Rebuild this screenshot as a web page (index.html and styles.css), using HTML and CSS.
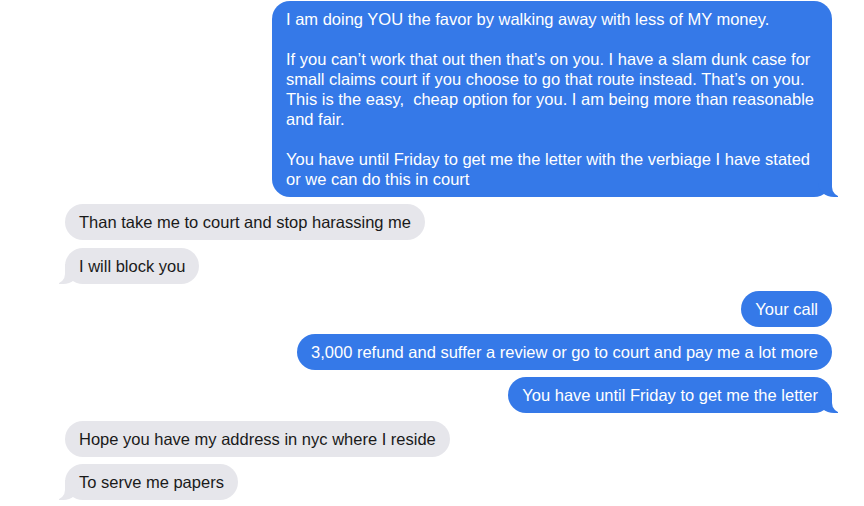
FILE: index.html
```html
<!DOCTYPE html>
<html lang="en">
<head>
    <meta charset="UTF-8">
    <meta name="viewport" content="width=device-width, initial-scale=1.0">
    <title>Messages</title>
    <link rel="stylesheet" href="styles.css">
</head>
<body>

    <div class="thread">
        <div class="msg sent tail">
            <p>I am doing YOU the favor by walking away with less of MY money.</p>
            <p>If you can’t work that out then that’s on you. I have a slam dunk case for small claims court if you choose to go that route instead. That’s on you. This is the easy,&nbsp; cheap option for you. I am being more than reasonable and fair.</p>
            <p>You have until Friday to get me the letter with the verbiage I have stated or we can do this in court</p>
        </div>

        <div class="msg received">Than take me to court and stop harassing me</div>
        <div class="msg received tail">I will block you</div>

        <div class="msg sent">Your call</div>
        <div class="msg sent">3,000 refund and suffer a review or go to court and pay me a lot more</div>
        <div class="msg sent tail">You have until Friday to get me the letter</div>

        <div class="msg received">Hope you have my address in nyc where I reside</div>
        <div class="msg received tail">To serve me papers</div>
    </div>

</body>
</html>
```

FILE: styles.css
```css
body {
    margin: 0;
    background: #fff;
    font-family: "Liberation Sans", Arial, sans-serif;
    font-size: 16.5px;
    line-height: 20px;
}
.thread {
    display: flex;
    flex-direction: column;
    gap: 7.3px;
    padding: 1px 32px 0 65px;
}
.msg {
    position: relative;
    max-width: 560px;
    box-sizing: border-box;
    padding: 8px 14px;
    border-radius: 18px;
}
.msg p {
    margin: 0 0 20px;
}
.msg p:last-child {
    margin-bottom: 0;
}
.sent {
    align-self: flex-end;
    background: #3579e8;
    color: #fff;
}
.received {
    align-self: flex-start;
    background: #e6e6eb;
    color: #1a1a1a;
}

/* petite queue de bulle */
.tail::before, .tail::after {
    content: "";
    position: absolute;
    bottom: 0;
    height: 20px;
}
.sent.tail::before {
    right: -6px;
    width: 20px;
    background: #3579e8;
    border-bottom-left-radius: 16px 14px;
}
.sent.tail::after {
    right: -26px;
    width: 26px;
    background: #fff;
    border-bottom-left-radius: 10px;
}
.received.tail::before {
    left: -6px;
    width: 20px;
    background: #e6e6eb;
    border-bottom-right-radius: 16px 14px;
}
.received.tail::after {
    left: -26px;
    width: 26px;
    background: #fff;
    border-bottom-right-radius: 10px;
}
```
